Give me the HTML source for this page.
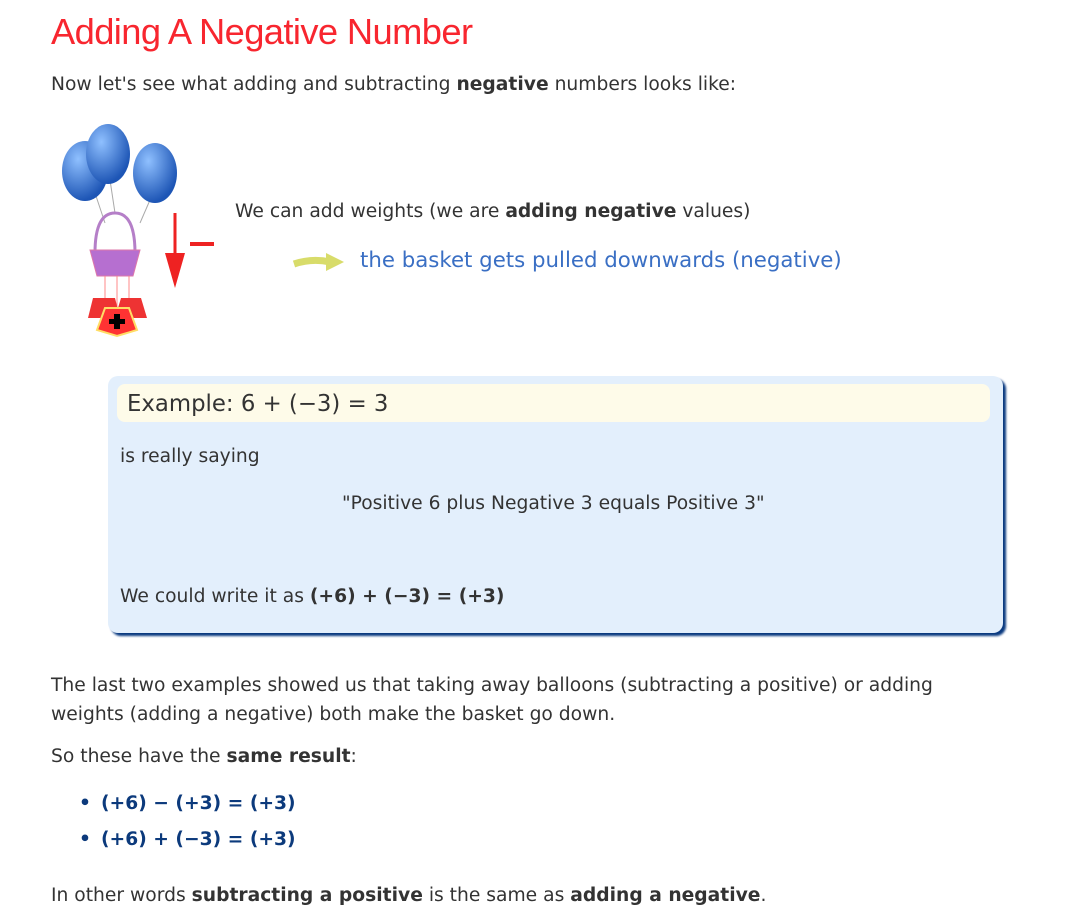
<!DOCTYPE html>
<html><head><meta charset="utf-8"><style>
body{margin:0;background:#fff;font-family:"DejaVu Sans","Liberation Sans",sans-serif;font-size:18.7px;color:#333;}
.a{position:absolute;white-space:nowrap}
b{font-weight:bold}
</style></head><body>
<div class="a" style="left:51px;top:11px;font-family:'Liberation Sans',sans-serif;font-size:36.3px;color:#f8262f;letter-spacing:-0.6px">Adding A Negative Number</div>
<div class="a" style="left:51px;top:74px">Now let's see what adding and subtracting <b>negative</b> numbers looks like:</div>
<svg class="a" style="left:55px;top:118px" width="170" height="222">
<defs><radialGradient id="g" cx="0.35" cy="0.3" r="0.7"><stop offset="0" stop-color="#8fc0ff"/><stop offset="1" stop-color="#1d55b5"/></radialGradient></defs>
<line x1="40" y1="75" x2="50" y2="105" stroke="#aaa"/><line x1="55" y1="62" x2="60" y2="95" stroke="#aaa"/><line x1="95" y1="82" x2="85" y2="105" stroke="#aaa"/>
<ellipse cx="30" cy="53" rx="23" ry="30" fill="url(#g)"/>
<ellipse cx="53" cy="36" rx="22" ry="30" fill="url(#g)"/>
<ellipse cx="100" cy="55" rx="22" ry="30" fill="url(#g)"/>
<path d="M40 135 Q40 95 60 95 Q80 95 80 135" fill="none" stroke="#b57fc8" stroke-width="3"/>
<path d="M35 132 H85 L78 158 H42 Z" fill="#b66fd0" stroke="#d7a" stroke-width="1"/>
<line x1="50" y1="158" x2="50" y2="185" stroke="#f88"/><line x1="62" y1="158" x2="62" y2="190" stroke="#f88"/><line x1="74" y1="158" x2="74" y2="185" stroke="#f88"/>
<path d="M38 180 H60 L65 200 H33 Z" fill="#e33"/><path d="M66 180 H86 L92 200 H60 Z" fill="#e33"/>
<path d="M50 190 H74 L82 212 L62 218 L42 212 Z" fill="#f33" stroke="#fd6" stroke-width="2"/>
<path d="M59 196h6v5h5v5h-5v5h-6v-5h-5v-5h5z" fill="#000"/>
<line x1="120" y1="95" x2="120" y2="158" stroke="#e22" stroke-width="3"/>
<path d="M110 135 L120 170 L130 135 Z" fill="#e22"/>
<rect x="135" y="124" width="24" height="4" fill="#e22"/>
</svg>
<div class="a" style="left:235px;top:201px">We can add weights (we are <b>adding negative</b> values)</div>
<svg class="a" style="left:292px;top:250px" width="60" height="24"><path d="M2 14 Q20 8 38 12" stroke="#d8dc6a" stroke-width="7" fill="none"/><path d="M34 3 L52 12 L34 21 Z" fill="#d8dc6a"/></svg>
<div class="a" style="left:360px;top:248px;font-size:21.3px;color:#3a6fc4">the basket gets pulled downwards (negative)</div>
<div class="a" style="left:108px;top:376px;width:895px;height:257px;background:#e3effc;border-radius:10px;box-shadow:3px 3px 2px #0a3a80"></div>
<div class="a" style="left:117px;top:384px;width:873px;height:38px;background:#fefbe9;border-radius:8px"></div>
<div class="a" style="left:127px;top:391px;font-size:22.8px">Example: 6 + (−3) = 3</div>
<div class="a" style="left:120px;top:446px">is really saying</div>
<div class="a" style="left:342px;top:493px">"Positive 6 plus Negative 3 equals Positive 3"</div>
<div class="a" style="left:120px;top:586px">We could write it as <b>(+6) + (−3) = (+3)</b></div>
<div class="a" style="left:51px;top:671px;line-height:29px">The last two examples showed us that taking away balloons (subtracting a positive) or adding<br>weights (adding a negative) both make the basket go down.</div>
<div class="a" style="left:51px;top:746px">So these have the <b>same result</b>:</div>
<div class="a" style="left:79px;top:793px;color:#0c3a7c"><b>•</b></div><div class="a" style="left:101px;top:793px;color:#0c3a7c"><b>(+6) − (+3) = (+3)</b></div>
<div class="a" style="left:79px;top:829px;color:#0c3a7c"><b>•</b></div><div class="a" style="left:101px;top:829px;color:#0c3a7c"><b>(+6) + (−3) = (+3)</b></div>
<div class="a" style="left:51px;top:885px">In other words <b>subtracting a positive</b> is the same as <b>adding a negative</b>.</div>
</body></html>
